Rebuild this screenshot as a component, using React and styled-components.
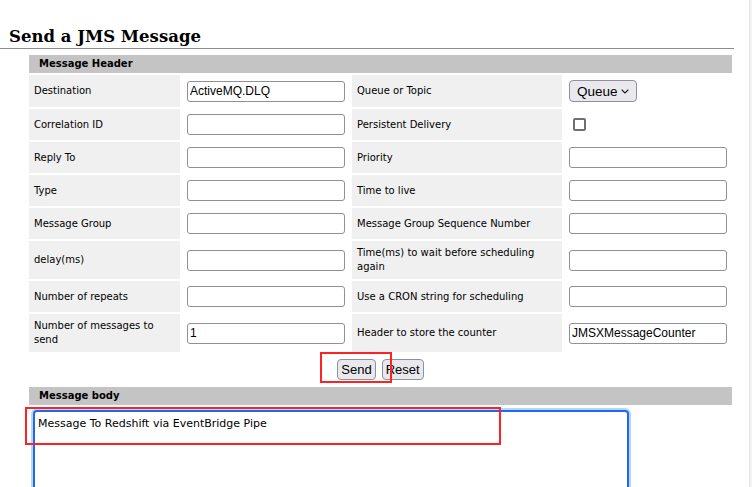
import React from "react";
import styled, { createGlobalStyle } from "styled-components";

const GlobalStyle = createGlobalStyle`
  html, body {
    margin: 0;
    padding: 0;
    background: #ffffff;
  }
  body {
    font-family: "DejaVu Sans", Verdana, sans-serif;
    color: #000;
  }
`;

const headerRows = [
  ["Destination", { kind: "text", value: "ActiveMQ.DLQ" }, "Queue or Topic", { kind: "select" }],
  ["Correlation ID", { kind: "text" }, "Persistent Delivery", { kind: "check" }],
  ["Reply To", { kind: "text" }, "Priority", { kind: "text" }],
  ["Type", { kind: "text" }, "Time to live", { kind: "text" }],
  ["Message Group", { kind: "text" }, "Message Group Sequence Number", { kind: "text" }],
  ["delay(ms)", { kind: "text" }, "Time(ms) to wait before scheduling again", { kind: "text" }],
  ["Number of repeats", { kind: "text" }, "Use a CRON string for scheduling", { kind: "text" }],
  ["Number of messages to send", { kind: "text", value: "1" }, "Header to store the counter", { kind: "text", value: "JMSXMessageCounter" }],
];

const Field = ({ field }) => {
  if (field.kind === "select") {
    return (
      <SelectWrap>
        <Select defaultValue="queue">
          <option value="queue">Queue</option>
          <option value="topic">Topic</option>
        </Select>
        <Chevron width="8" height="5" viewBox="0 0 8 5">
          <path d="M1 1 L4 4 L7 1" fill="none" stroke="#222" strokeWidth="1.1" strokeLinecap="round" strokeLinejoin="round" />
        </Chevron>
      </SelectWrap>
    );
  }
  if (field.kind === "check") {
    return <Check type="checkbox" />;
  }
  return <TextInput type="text" defaultValue={field.value || ""} />;
};

const App = () => {
  return (
    <Page>
      <GlobalStyle />
      <Main>
        <Title>Send a JMS Message</Title>
        <Form>
          <colgroup>
            <col style={{ width: 151 }} />
            <col style={{ width: 168 }} />
            <col style={{ width: 210 }} />
            <col style={{ width: 168 }} />
          </colgroup>
          <tbody>
            <tr>
              <SectionHead colSpan={4}>Message Header</SectionHead>
            </tr>
            {headerRows.map((row) => (
              <tr key={row[0]}>
                <Label>{row[0]}</Label>
                <FieldCell><Field field={row[1]} /></FieldCell>
                <Label>{row[2]}</Label>
                <FieldCell><Field field={row[3]} /></FieldCell>
              </tr>
            ))}
            <tr>
              <ButtonCell colSpan={4}>
                <Buttons>
                  <Button type="button">Send</Button>
                  <Button type="reset">Reset</Button>
                </Buttons>
              </ButtonCell>
            </tr>
            <tr>
              <SectionHead colSpan={4}>Message body</SectionHead>
            </tr>
            <tr>
              <BodyCell colSpan={4}>
                <Body defaultValue="Message To Redshift via EventBridge Pipe" />
              </BodyCell>
            </tr>
          </tbody>
        </Form>
      </Main>
      <ScrollTrack />
      <Mark style={{ left: 320, top: 352, width: 72, height: 31 }} />
      <Mark style={{ left: 25, top: 407, width: 476, height: 38 }} />
    </Page>
  );
};

export default App;

const Page = styled.div`
  position: relative;
  display: flex;
  width: 752px;
  height: 487px;
  overflow: hidden;
`;

const Main = styled.div`
  flex: 1;
`;

const ScrollTrack = styled.div`
  width: 2px;
  background: #f4f4f4;
  border-left: 1px solid #e2e2e2;
`;

const Title = styled.h2`
  margin: 27px 0 0 0;
  width: 725px;
  padding: 0 0 1px 9px;
  font-family: "DejaVu Serif", Georgia, serif;
  font-weight: bold;
  font-size: 16.5px;
  line-height: 20px;
  border-bottom: 1px solid #8c8c8c;
`;

const Form = styled.table`
  margin: 4px 0 0 27px;
  width: 707px;
  border-spacing: 2px;
  table-layout: fixed;
  font-size: 10px;
`;

const SectionHead = styled.td`
  height: 18px;
  padding: 0 10px;
  background: #c4c4c4;
  font-weight: bold;
  line-height: 18px;
`;

const Label = styled.td`
  padding: 5px;
  background: #f0f0f0;
  line-height: 14px;
  vertical-align: middle;
`;

const FieldCell = styled.td`
  padding: 5px;
  vertical-align: middle;
`;

const TextInput = styled.input`
  display: block;
  box-sizing: border-box;
  width: 158px;
  height: 21px;
  margin: 0;
  padding: 1px 2px;
  border: 1px solid #8f8f9d;
  border-radius: 3px;
  font-family: "Liberation Sans", Arial, sans-serif;
  font-size: 12px;
  color: #000;
  background: #fff;
`;

const SelectWrap = styled.div`
  position: relative;
  width: 68px;
`;

const Select = styled.select`
  appearance: none;
  display: block;
  box-sizing: border-box;
  width: 68px;
  height: 22px;
  margin: 0;
  padding: 0 0 0 7px;
  border: 1px solid #8f8f9d;
  border-radius: 4px;
  background: #e9e9ed;
  font-family: "Liberation Sans", Arial, sans-serif;
  font-size: 13.5px;
  color: #000;
`;

const Chevron = styled.svg`
  position: absolute;
  right: 8px;
  top: 9px;
  pointer-events: none;
`;

const Check = styled.input`
  appearance: none;
  display: block;
  width: 13px;
  height: 13px;
  margin: 0 0 0 4px;
  border: 2px solid #6e6e78;
  border-radius: 2px;
  background: #fff;
`;

const ButtonCell = styled.td`
  padding: 5px 0;
`;

const Buttons = styled.div`
  display: flex;
  justify-content: center;
  gap: 6px;
`;

const Button = styled.button`
  height: 21px;
  padding: 0 3px;
  border: 1px solid #8f8f9d;
  border-radius: 4px;
  background: #e9e9ed;
  font-family: "Liberation Sans", Arial, sans-serif;
  font-size: 13px;
  color: #000;
`;

const BodyCell = styled.td`
  padding: 3px 0 0 4px;
`;

const Body = styled.textarea`
  display: block;
  box-sizing: border-box;
  width: 596px;
  height: 120px;
  margin: 0;
  padding: 5px 3px;
  border: 2px solid #2467ee;
  border-radius: 4px;
  box-shadow: 0 0 0 2px #b8d8fb;
  outline: none;
  resize: none;
  font-family: "DejaVu Sans", Verdana, sans-serif;
  font-size: 11px;
  line-height: 14px;
  color: #000;
`;

const Mark = styled.div`
  position: absolute;
  box-sizing: border-box;
  border: 2px solid #ff2222;
  pointer-events: none;
`;
